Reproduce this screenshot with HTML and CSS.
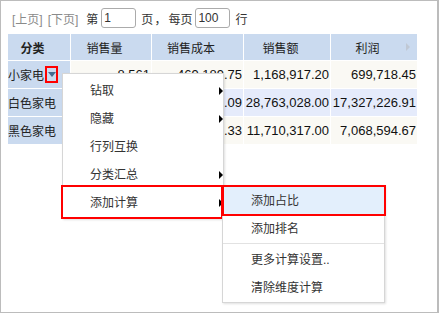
FILE: index.html
```html
<!DOCTYPE html>
<html>
<head>
<meta charset="utf-8">
<link rel="stylesheet" href="styles.css">
</head>
<body>
<div class="frame">
  <div class="toolbar">
    <span class="pager">[上页]</span>
    <span class="pager next">[下页]</span>
    <span class="lbl di">第</span>
    <input class="num" value="1">
    <span class="lbl ye">页</span>
    <span class="lbl comma">，</span>
    <span class="lbl mei">每页</span>
    <input class="num" value="100">
    <span class="lbl hang">行</span>
  </div>
  <div class="grid">
    <div class="hd first">分类</div>
    <div class="hd">销售量</div>
    <div class="hd">销售成本</div>
    <div class="hd">销售额</div>
    <div class="hd last">利润<span class="sort"></span></div>

    <div class="cat">小家电<span class="drop"><span class="tri"></span></span></div>
    <div class="val odd">8,561</div>
    <div class="val odd">469,189.75</div>
    <div class="val odd">1,168,917.20</div>
    <div class="val odd">699,718.45</div>

    <div class="cat">白色家电</div>
    <div class="val even">212,345</div>
    <div class="val even">11,435,801.09</div>
    <div class="val even">28,763,028.00</div>
    <div class="val even">17,327,226.91</div>

    <div class="cat">黑色家电</div>
    <div class="val odd">98,765</div>
    <div class="val odd">4,641,722.33</div>
    <div class="val odd">11,710,317.00</div>
    <div class="val odd">7,068,594.67</div>
  </div>

  <div class="menu main">
    <div class="item">钻取<span class="arr"></span></div>
    <div class="item">隐藏<span class="arr"></span></div>
    <div class="item">行列互换</div>
    <div class="item">分类汇总<span class="arr"></span></div>
    <div class="item">添加计算<span class="arr"></span></div>
  </div>
  <div class="redbox box1"></div>

  <div class="menu sub">
    <div class="item hover">添加占比</div>
    <div class="item">添加排名</div>
    <div class="sep"></div>
    <div class="item">更多计算设置..</div>
    <div class="item">清除维度计算</div>
  </div>
  <div class="redbox box2"></div>
</div>
</body>
</html>
```
FILE: styles.css
```css
html, body {
  margin: 0;
  padding: 0;
  background: #fff;
}
body {
  font-family: "Liberation Sans", "Noto Sans CJK SC", sans-serif;
  font-size: 12px;
  color: #333;
}
.frame {
  position: relative;
  width: 439px;
  height: 313px;
  box-sizing: border-box;
  border: 1px solid #bcbcbc;
  border-right-width: 2px;
  padding: 7px 0 0 7px;
}
.toolbar {
  display: flex;
  align-items: center;
  height: 20px;
  padding-left: 4px;
}
.pager {
  color: #8a8a8a;
}
.next { margin-left: 5px; }
.di { margin-left: 8px; margin-right: 3px; }
.ye { margin-left: 5px; }
.comma { margin-left: 1px; }
.mei { margin-left: 2px; margin-right: 3px; }
.hang { margin-left: 5px; }
.num {
  box-sizing: border-box;
  width: 35px;
  height: 20px;
  border: 1px solid #ababab;
  border-radius: 3px;
  padding: 0 2px;
  margin: 0;
  font-family: "Liberation Sans", sans-serif;
  font-size: 12px;
  color: #333;
  outline: none;
}
.grid {
  margin-top: 6px;
  display: grid;
  grid-template-columns: 62px 80px 91px 86px 86px;
  grid-template-rows: 26px 27px 27px 27px;
  gap: 1px;
  width: 409px;
  background: #fff;
}
.hd {
  background: #cadaef;
  display: flex;
  align-items: center;
  justify-content: center;
  padding-right: 13px;
  color: #222;
  position: relative;
}
.hd.first { font-weight: bold; }
.sort {
  position: absolute;
  right: 7px;
  top: 9px;
  width: 0;
  height: 0;
  border-left: 4px solid #c0c8d4;
  border-top: 4px solid transparent;
  border-bottom: 4px solid transparent;
}
.cat {
  background: #cadaef;
  display: flex;
  align-items: center;
  color: #222;
}
.drop {
  box-sizing: border-box;
  width: 13px;
  height: 17px;
  border: 2px solid #f00;
  margin-left: 1px;
  display: flex;
  align-items: center;
  justify-content: center;
}
.tri {
  width: 0;
  height: 0;
  border-top: 5px solid #456a90;
  border-left: 4px solid transparent;
  border-right: 4px solid transparent;
}
.val {
  display: flex;
  align-items: center;
  justify-content: flex-end;
  padding-right: 1px;
  font-size: 13px;
  color: #111;
  white-space: nowrap;
}
.odd { background: #faf9f4; }
.even { background: #e5ebfb; }

.menu {
  position: absolute;
  background: #fff;
  border: 1px solid #d6d6d6;
  box-shadow: 1px 1px 2px rgba(0, 0, 0, 0.12);
  box-sizing: border-box;
}
.main {
  left: 61px;
  top: 72px;
  width: 162px;
  height: 146px;
  padding-top: 3px;
}
.item {
  position: relative;
  height: 28px;
  line-height: 28px;
  padding-left: 27px;
  color: #333;
}
.arr {
  position: absolute;
  right: 0;
  top: 10px;
  width: 0;
  height: 0;
  border-left: 4px solid #000;
  border-top: 4px solid transparent;
  border-bottom: 4px solid transparent;
}
.sub {
  left: 221px;
  top: 184px;
  width: 163px;
  height: 118px;
}
.sub .item {
  padding-left: 28px;
  height: 28px;
  line-height: 30px;
}
.sub .hover {
  background: #e3effc;
}
.sep {
  height: 1px;
  margin: 1px 0;
  background: #e2e2e2;
}
.redbox {
  position: absolute;
  box-sizing: border-box;
  border: 2px solid #f00;
}
.box1 {
  left: 60px;
  top: 184px;
  width: 162px;
  height: 34px;
}
.box2 {
  left: 221px;
  top: 184px;
  width: 164px;
  height: 31px;
}
```
